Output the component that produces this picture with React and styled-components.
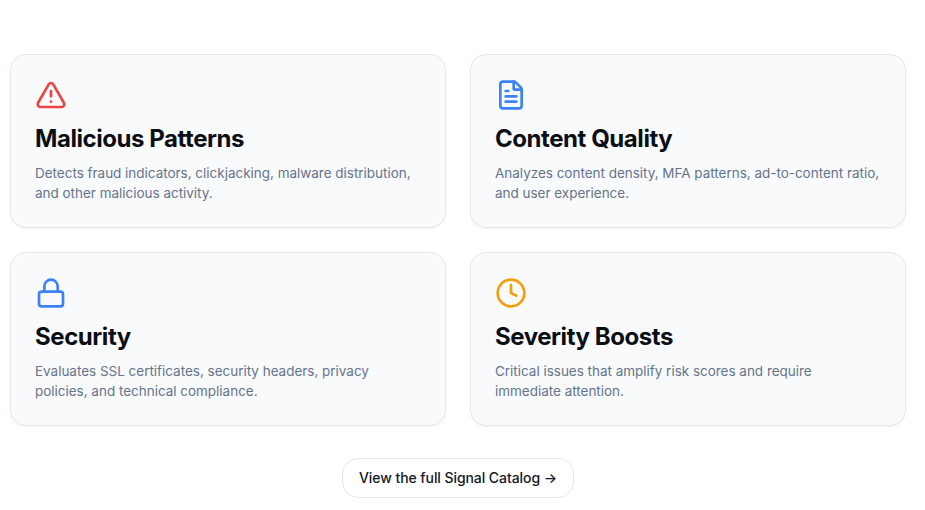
import styled, { createGlobalStyle } from 'styled-components'
import { TriangleAlert, FileText, Lock, Clock } from 'lucide-react'

const GlobalStyle = createGlobalStyle`
  body {
    margin: 0;
    background: #fff;
    font-family: Inter, "Noto Sans", sans-serif;
  }
`

const Page = styled.main`
  width: 896px;
  padding: 54px 0 12px 10px;
  display: flex;
  flex-direction: column;
  align-items: center;
  gap: 32px;
`

const Grid = styled.div`
  width: 100%;
  display: grid;
  grid-template-columns: 1fr 1fr;
  gap: 24px;
`

const Card = styled.article`
  padding: 24px;
  background: #f9fafc;
  border: 1px solid #e5e7eb;
  border-radius: 16px;
  box-shadow: 0 1px 2px rgba(0, 0, 0, 0.05);
`

const IconWrap = styled.div`
  width: 32px;
  height: 32px;
  margin-bottom: 12px;
  color: ${({ $color }) => $color};

  svg {
    display: block;
  }
`

const Title = styled.h3`
  margin: 0 0 8px;
  font-size: 24px;
  line-height: 32px;
  font-weight: 700;
  letter-spacing: -0.44px;
  color: #0b0f14;
`

const Description = styled.p`
  margin: 0;
  font-size: 13.5px;
  line-height: 20px;
  letter-spacing: -0.02px;
  color: #64748b;
`

const CatalogLink = styled.a`
  display: block;
  padding: 0 16px;
  height: 38px;
  line-height: 38px;
  font-size: 14px;
  font-weight: 500;
  letter-spacing: -0.07px;
  color: #111827;
  background: #fff;
  border: 1px solid #e5e7eb;
  border-radius: 16px;
  text-decoration: none;
`

const cards = [
  {
    title: 'Malicious Patterns',
    text: 'Detects fraud indicators, clickjacking, malware distribution, and other malicious activity.',
    Icon: TriangleAlert,
    color: '#ef4444',
  },
  {
    title: 'Content Quality',
    text: 'Analyzes content density, MFA patterns, ad-to-content ratio, and user experience.',
    Icon: FileText,
    color: '#3b82f6',
  },
  {
    title: 'Security',
    text: 'Evaluates SSL certificates, security headers, privacy policies, and technical compliance.',
    Icon: Lock,
    color: '#3b82f6',
  },
  {
    title: 'Severity Boosts',
    text: 'Critical issues that amplify risk scores and require immediate attention.',
    Icon: Clock,
    color: '#f59e0b',
  },
]

export default function App() {
  return (
    <>
      <GlobalStyle />
      <Page>
        <Grid>
          {cards.map(({ title, text, Icon, color }) => (
            <Card key={title}>
              <IconWrap $color={color}>
                <Icon size={32} strokeWidth={2} />
              </IconWrap>
              <Title>{title}</Title>
              <Description>{text}</Description>
            </Card>
          ))}
        </Grid>
        <CatalogLink href="#">View the full Signal Catalog →</CatalogLink>
      </Page>
    </>
  )
}
